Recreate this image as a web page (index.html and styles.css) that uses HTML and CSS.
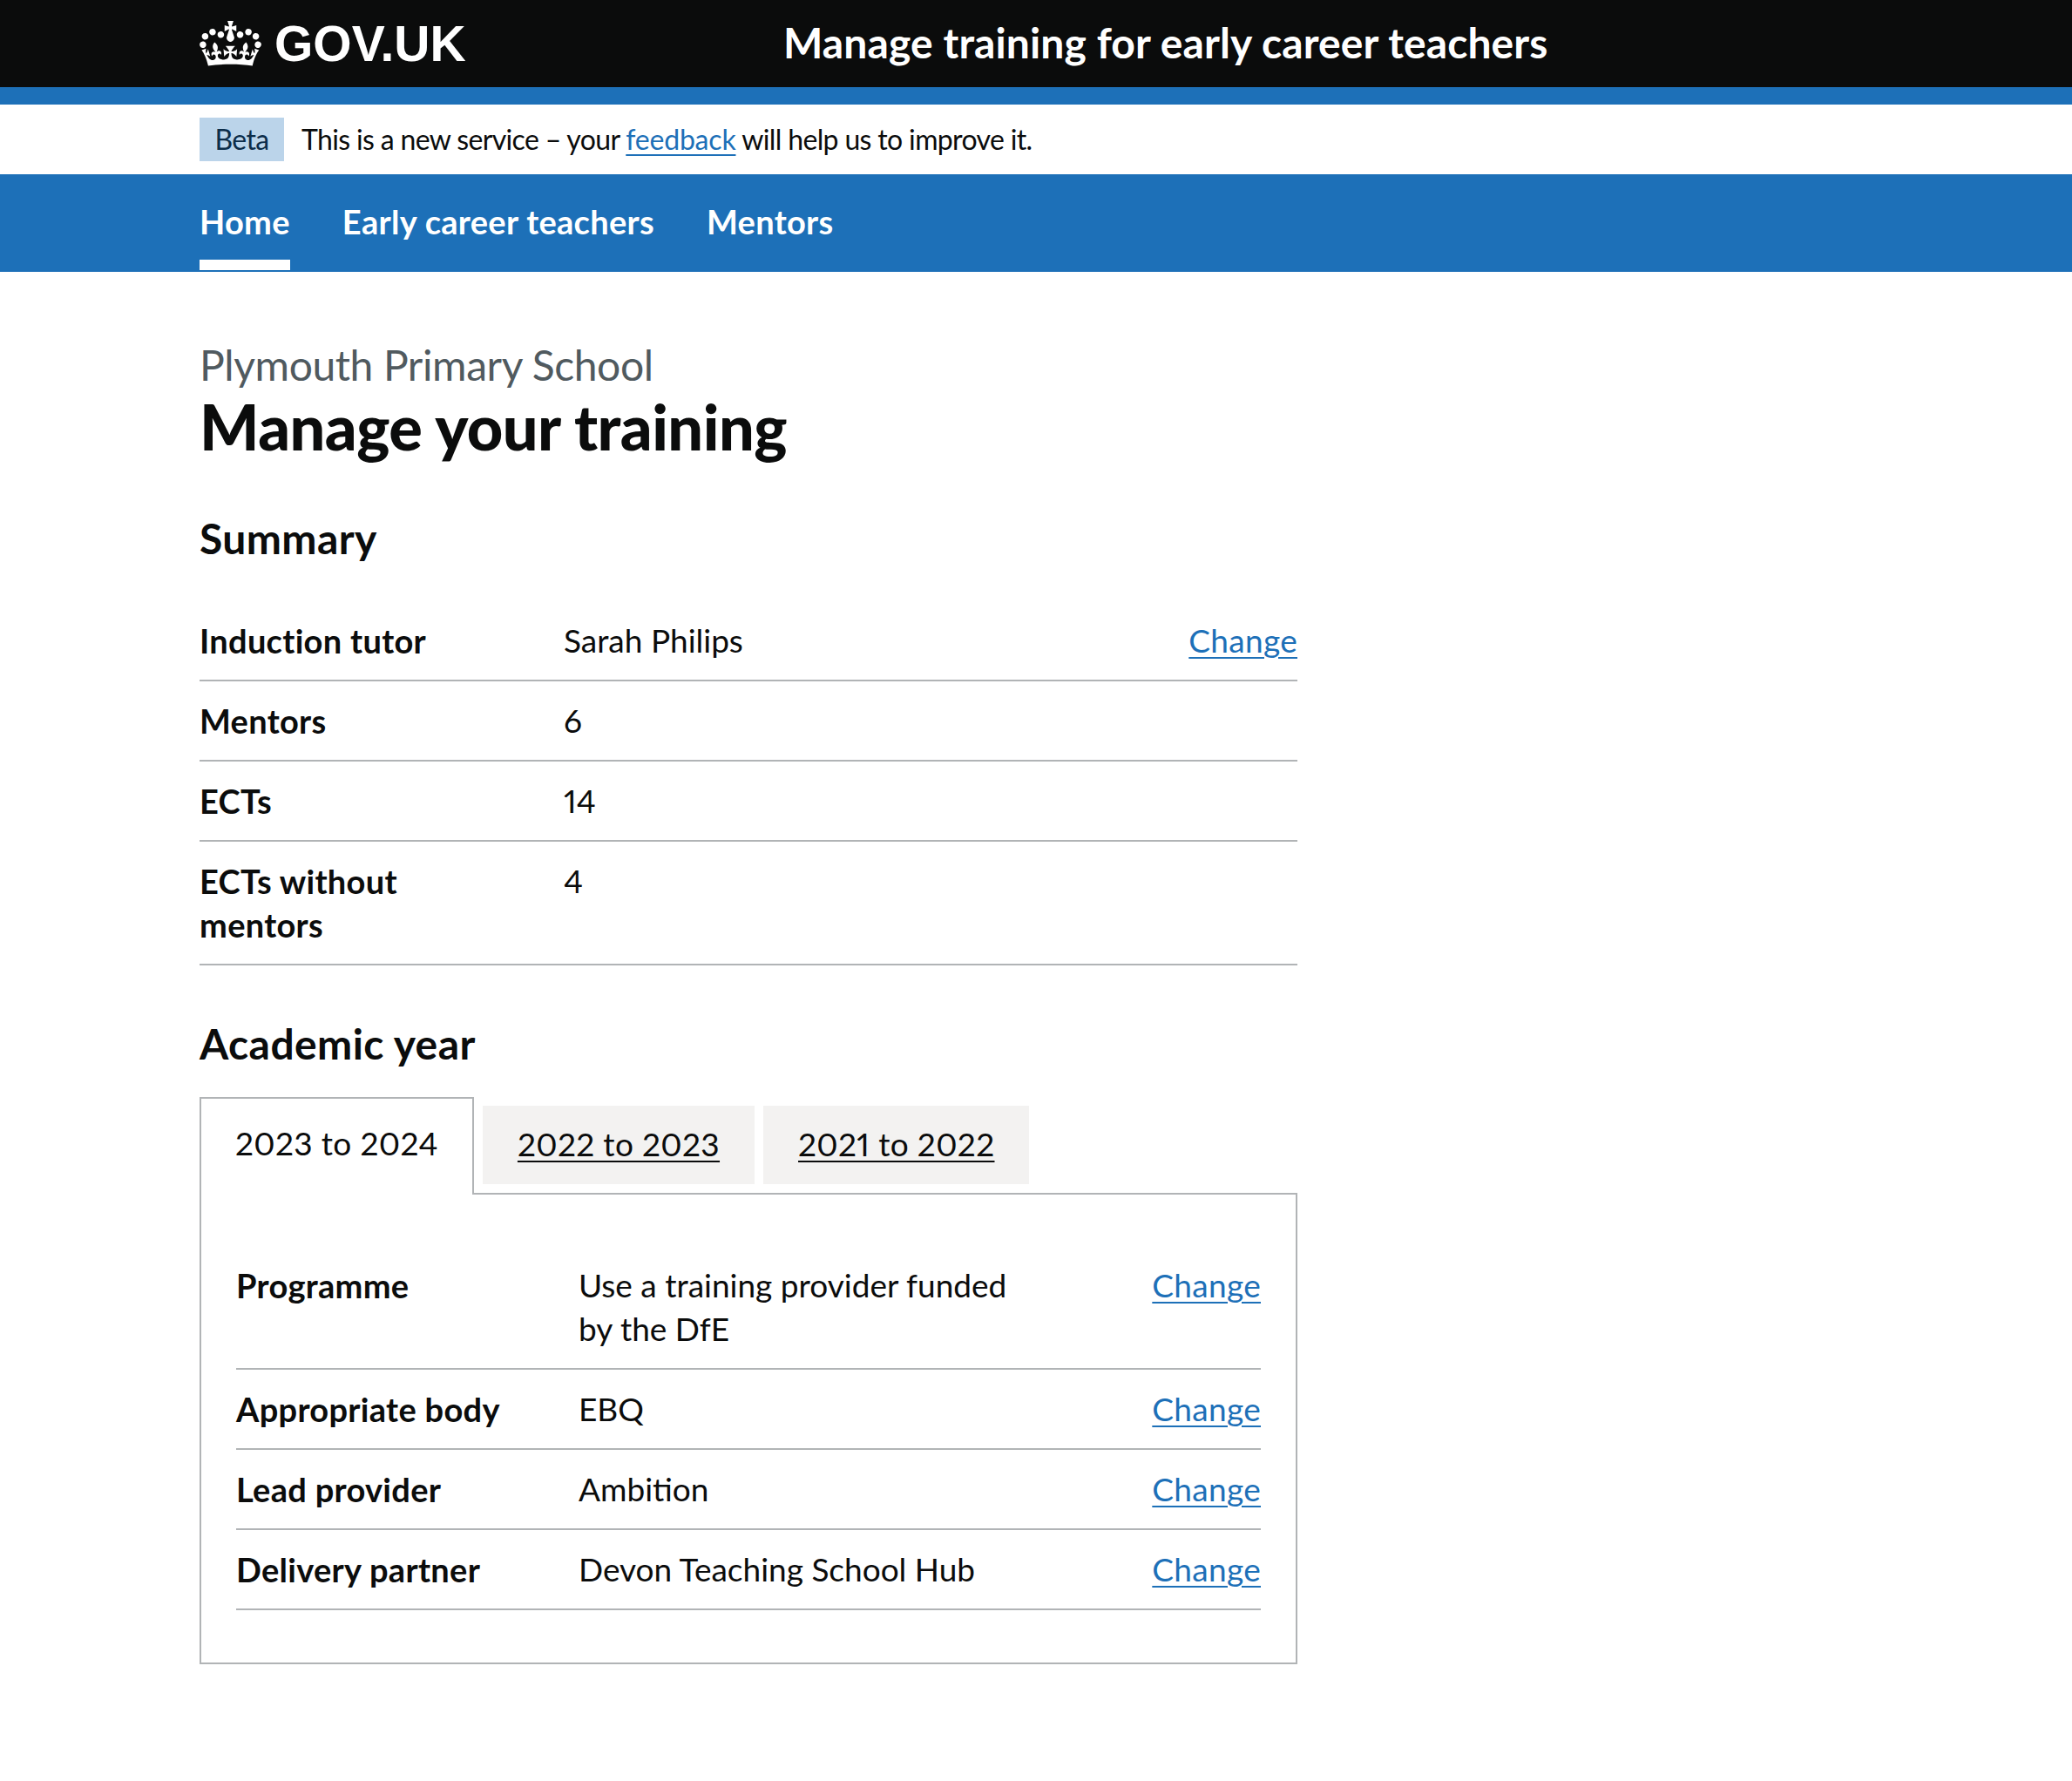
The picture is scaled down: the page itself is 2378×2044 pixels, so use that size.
FILE: index.html
```html
<!DOCTYPE html>
<html lang="en">
<head>
    <meta charset="UTF-8">
    <meta name="viewport" content="width=device-width, initial-scale=1.0">
    <title>Manage your training</title>
    <link rel="stylesheet" href="styles.css">
</head>
<body>
    <header class="header">
        <div class="container header-inner">
            <a class="logo" href="#">
                <svg class="crown" viewBox="0 0 132 97" aria-hidden="true"><path fill="currentColor" fill-rule="evenodd" d="M25 30.2c3.5 1.5 7.7-.2 9.1-3.7 1.5-3.6-.2-7.8-3.9-9.2-3.6-1.4-7.6.3-9.1 3.9-1.4 3.5.3 7.5 3.9 9zM9 39.5c3.6 1.5 7.8-.2 9.2-3.7 1.5-3.6-.2-7.8-3.9-9.1-3.6-1.5-7.6.2-9.1 3.8-1.4 3.5.3 7.5 3.8 9zM4.4 57.2c3.5 1.5 7.7-.2 9.1-3.8 1.5-3.6-.2-7.7-3.9-9.1-3.5-1.5-7.6.3-9.1 3.8-1.4 3.5.3 7.6 3.9 9.1zm38.3-21.4c3.5 1.5 7.7-.2 9.1-3.8 1.5-3.6-.2-7.7-3.9-9.1-3.6-1.5-7.6.3-9.1 3.8-1.3 3.6.4 7.7 3.9 9.1zm64.4-5.6c-3.6 1.5-7.8-.2-9.1-3.7-1.5-3.6.2-7.8 3.8-9.2 3.6-1.4 7.7.3 9.2 3.9 1.3 3.5-.4 7.5-3.9 9zm15.9 9.3c-3.6 1.5-7.7-.2-9.1-3.7-1.5-3.6.2-7.8 3.7-9.1 3.6-1.5 7.7.2 9.2 3.8 1.5 3.5-.3 7.5-3.8 9zm4.7 17.7c-3.6 1.5-7.8-.2-9.2-3.8-1.5-3.6.2-7.7 3.9-9.1 3.6-1.5 7.7.3 9.2 3.8 1.3 3.5-.4 7.6-3.9 9.1zM89.3 35.8c-3.6 1.5-7.8-.2-9.2-3.8-1.4-3.6.2-7.7 3.9-9.1 3.6-1.5 7.7.3 9.2 3.8 1.4 3.6-.3 7.7-3.9 9.1zM69.7 17.7l8.9 4.7V9.3l-8.9 2.8c-.2-.3-.5-.6-.9-.9L72.4 0H59.6l3.5 11.2c-.3.3-.6.5-.9.9l-8.8-2.8v13.1l8.8-4.7c.3.3.6.7.9.9l-5 15.4v.1c-.2.8-.4 1.6-.4 2.4 0 4.1 3.1 7.5 7 8.1h.2c.3 0 .7.1 1 .1.4 0 .7 0 1-.1h.2c4-.6 7.1-4.1 7.1-8.1 0-.8-.1-1.7-.4-2.4V34l-5.1-15.4c.4-.2.7-.6 1-.9zM66 92.8c16.9 0 32.8 1.1 47.1 3.2 4-16.9 8.9-26.7 14-33.5l-9.6-3.4c1 4.9 1.1 7.2 0 10.2-1.5-1.4-3-4.3-4.2-8.7L108.6 76c2.8-2 5-3.2 7.5-3.3-4.4 9.4-10 11.9-13.6 11.2-4.3-.8-6.3-4.6-5.6-7.9 1-4.7 5.7-5.9 8-.5 4.3-8.7-3-11.4-7.6-8.8 7.1-7.2 7.9-13.5 2.1-21.1-8 6.1-8.1 12.3-4.5 20.8-4.7-5.4-12.1-2.5-9.5 6.2 3.4-5.2 7.9-2 7.2 3.1-.6 4.3-6.4 7.8-13.5 7.2-10.3-.9-10.9-8-11.2-13.8 2.5-.5 7.1 1.8 11 7.3L80.2 60c-4.1 4.4-8 5.3-12.3 5.4 1.4-4.4 8-11.6 8-11.6H55.5s6.4 7.2 7.9 11.6c-4.2-.1-8-1-12.3-5.4l1.4 16.4c3.9-5.5 8.5-7.7 10.9-7.3-.3 5.8-.9 12.8-11.1 13.8-7.2.6-12.9-2.9-13.5-7.2-.7-5 3.8-8.3 7.1-3.1 2.7-8.7-4.6-11.6-9.4-6.2 3.7-8.5 3.6-14.7-4.6-20.8-5.8 7.6-5 13.9 2.2 21.1-4.7-2.6-11.9.1-7.7 8.8 2.3-5.5 7.1-4.2 8.1.5.7 3.3-1.3 7.1-5.7 7.9-3.5.7-9-1.8-13.5-11.2 2.5.1 4.7 1.3 7.5 3.3l-4.7-15.4c-1.2 4.4-2.7 7.2-4.3 8.7-1.1-3-.9-5.3 0-10.2l-9.5 3.4c5 6.9 9.9 16.7 14 33.5 14.8-2.1 30.8-3.2 47.7-3.2z"/></svg>
                <span class="logo-text">GOV.UK</span>
            </a>
            <a class="service-name" href="#">Manage training for early career teachers</a>
        </div>
    </header>
    <div class="header-stripe"></div>

    <div class="container phase-banner">
        <strong class="tag">Beta</strong>
        <span class="phase-text">This is a new service – your <a href="#">feedback</a> will help us to improve it.</span>
    </div>

    <nav class="nav">
        <div class="container nav-list">
            <a class="nav-item nav-item-active" href="#">Home</a>
            <a class="nav-item" href="#">Early career teachers</a>
            <a class="nav-item" href="#">Mentors</a>
        </div>
    </nav>

    <main class="container main">
        <div class="two-thirds">
            <span class="caption">Plymouth Primary School</span>
            <h1>Manage your training</h1>

            <h2 class="summary-heading">Summary</h2>
            <dl class="summary-list">
                <div class="summary-row">
                    <dt>Induction tutor</dt>
                    <dd>Sarah Philips</dd>
                    <dd class="summary-action"><a href="#">Change</a></dd>
                </div>
                <div class="summary-row">
                    <dt>Mentors</dt>
                    <dd>6</dd>
                </div>
                <div class="summary-row">
                    <dt>ECTs</dt>
                    <dd>14</dd>
                </div>
                <div class="summary-row">
                    <dt>ECTs without mentors</dt>
                    <dd>4</dd>
                </div>
            </dl>

            <h2 class="year-heading">Academic year</h2>
            <div class="tabs">
                <ul class="tab-list">
                    <li class="tab tab-selected"><a href="#">2023 to 2024</a></li>
                    <li class="tab"><a href="#">2022 to 2023</a></li>
                    <li class="tab"><a href="#">2021 to 2022</a></li>
                </ul>
                <div class="tab-panel">
                    <dl class="summary-list">
                        <div class="summary-row">
                            <dt>Programme</dt>
                            <dd>Use a training provider funded<br>by the DfE</dd>
                            <dd class="summary-action"><a href="#">Change</a></dd>
                        </div>
                        <div class="summary-row">
                            <dt>Appropriate body</dt>
                            <dd>EBQ</dd>
                            <dd class="summary-action"><a href="#">Change</a></dd>
                        </div>
                        <div class="summary-row">
                            <dt>Lead provider</dt>
                            <dd>Ambition</dd>
                            <dd class="summary-action"><a href="#">Change</a></dd>
                        </div>
                        <div class="summary-row">
                            <dt>Delivery partner</dt>
                            <dd>Devon Teaching School Hub</dd>
                            <dd class="summary-action"><a href="#">Change</a></dd>
                        </div>
                    </dl>
                </div>
            </div>
        </div>
    </main>
</body>
</html>
```

FILE: styles.css
```css
* {
    box-sizing: border-box;
}
body {
    margin: 0;
    font-family: "Lato", "Noto Sans", sans-serif;
    font-size: 37px;
    line-height: 50px;
    font-variant-numeric: proportional-nums;
    color: #0b0c0c;
    background-color: #fff;
}
a {
    color: #1d70b8;
    text-underline-offset: 5px;
    text-decoration-thickness: 2px;
}
.container {
    width: 1920px;
    margin: 0 auto;
}
.header {
    background-color: #0b0c0c;
    height: 100px;
}
.header-inner {
    display: flex;
    align-items: center;
    height: 100px;
}
.logo {
    display: flex;
    align-items: center;
    gap: 15px;
    width: 670px;
    color: #fff;
    text-decoration: none;
}
.crown {
    width: 71px;
    height: 52px;
}
.logo-text {
    font-family: "Liberation Sans", Arial, sans-serif;
    font-weight: bold;
    font-size: 57px;
}
.service-name {
    margin-top: -2px;
    color: #fff;
    font-size: 48px;
    font-weight: bold;
    letter-spacing: 0.1px;
    text-decoration: none;
}
.header-stripe {
    height: 20px;
    background-color: #1d70b8;
}
.phase-banner {
    display: flex;
    align-items: center;
    gap: 20px;
    height: 80px;
    font-size: 32px;
    letter-spacing: -0.65px;
}
.phase-text a {
    letter-spacing: -0.2px;
}
.tag {
    display: block;
    width: 97px;
    height: 50px;
    line-height: 50px;
    text-align: center;
    font-weight: normal;
    background-color: #bbd4ea;
    color: #0c2d4a;
}
.nav {
    height: 112px;
    background-color: #1d70b8;
}
.nav-list {
    display: flex;
    gap: 60px;
}
.nav-item {
    display: block;
    height: 110px;
    padding-top: 29px;
    color: #fff;
    font-size: 38px;
    font-weight: bold;
    letter-spacing: 0.3px;
    text-decoration: none;
}
.nav-item-active {
    border-bottom: 12px solid #fff;
}
.main {
    padding-top: 77px;
}
.two-thirds {
    width: 1260px;
}
.caption {
    display: block;
    font-size: 48px;
    line-height: 60px;
    letter-spacing: -0.4px;
    color: #505a5f;
}
h1 {
    margin: 0;
    font-size: 72px;
    line-height: 80px;
    font-weight: 900;
    letter-spacing: -0.5px;
}
h2 {
    margin: 0;
    font-size: 48px;
    line-height: 60px;
    font-weight: bold;
    letter-spacing: 0.4px;
}
.summary-heading {
    margin-top: 59px;
    margin-bottom: 42px;
}
.year-heading {
    margin-top: 60px;
    margin-bottom: 31px;
}
.summary-list {
    margin: 0;
}
.summary-row {
    display: grid;
    grid-template-columns: 418px 1fr auto;
    padding: 20px 0;
    border-bottom: 2px solid #b1b4b6;
}
.summary-row dt {
    padding-right: 40px;
    font-size: 38px;
    font-weight: bold;
    letter-spacing: 0.3px;
}
.summary-row dd {
    margin: 0;
}
.summary-row .summary-action {
    letter-spacing: 0.3px;
    text-align: right;
}
.tab-list {
    display: flex;
    align-items: flex-start;
    gap: 10px;
    margin: 0;
    padding: 0;
    list-style: none;
}
.tab {
    margin-top: 10px;
    height: 90px;
    padding: 19px 40px;
    letter-spacing: 0.35px;
    background-color: #f3f2f1;
}
.tab a {
    color: #0b0c0c;
}
.tab-selected {
    position: relative;
    margin-top: 0;
    margin-bottom: -2px;
    height: 112px;
    padding: 26px 39px 0;
    background-color: #fff;
    border: 2px solid #b1b4b6;
    border-bottom: none;
}
.tab-selected a {
    text-decoration: none;
}
.tab-panel {
    padding: 59px 40px 60px;
    border: 2px solid #b1b4b6;
}
.tab-panel .summary-row {
    grid-template-columns: 393px 1fr auto;
}
```
